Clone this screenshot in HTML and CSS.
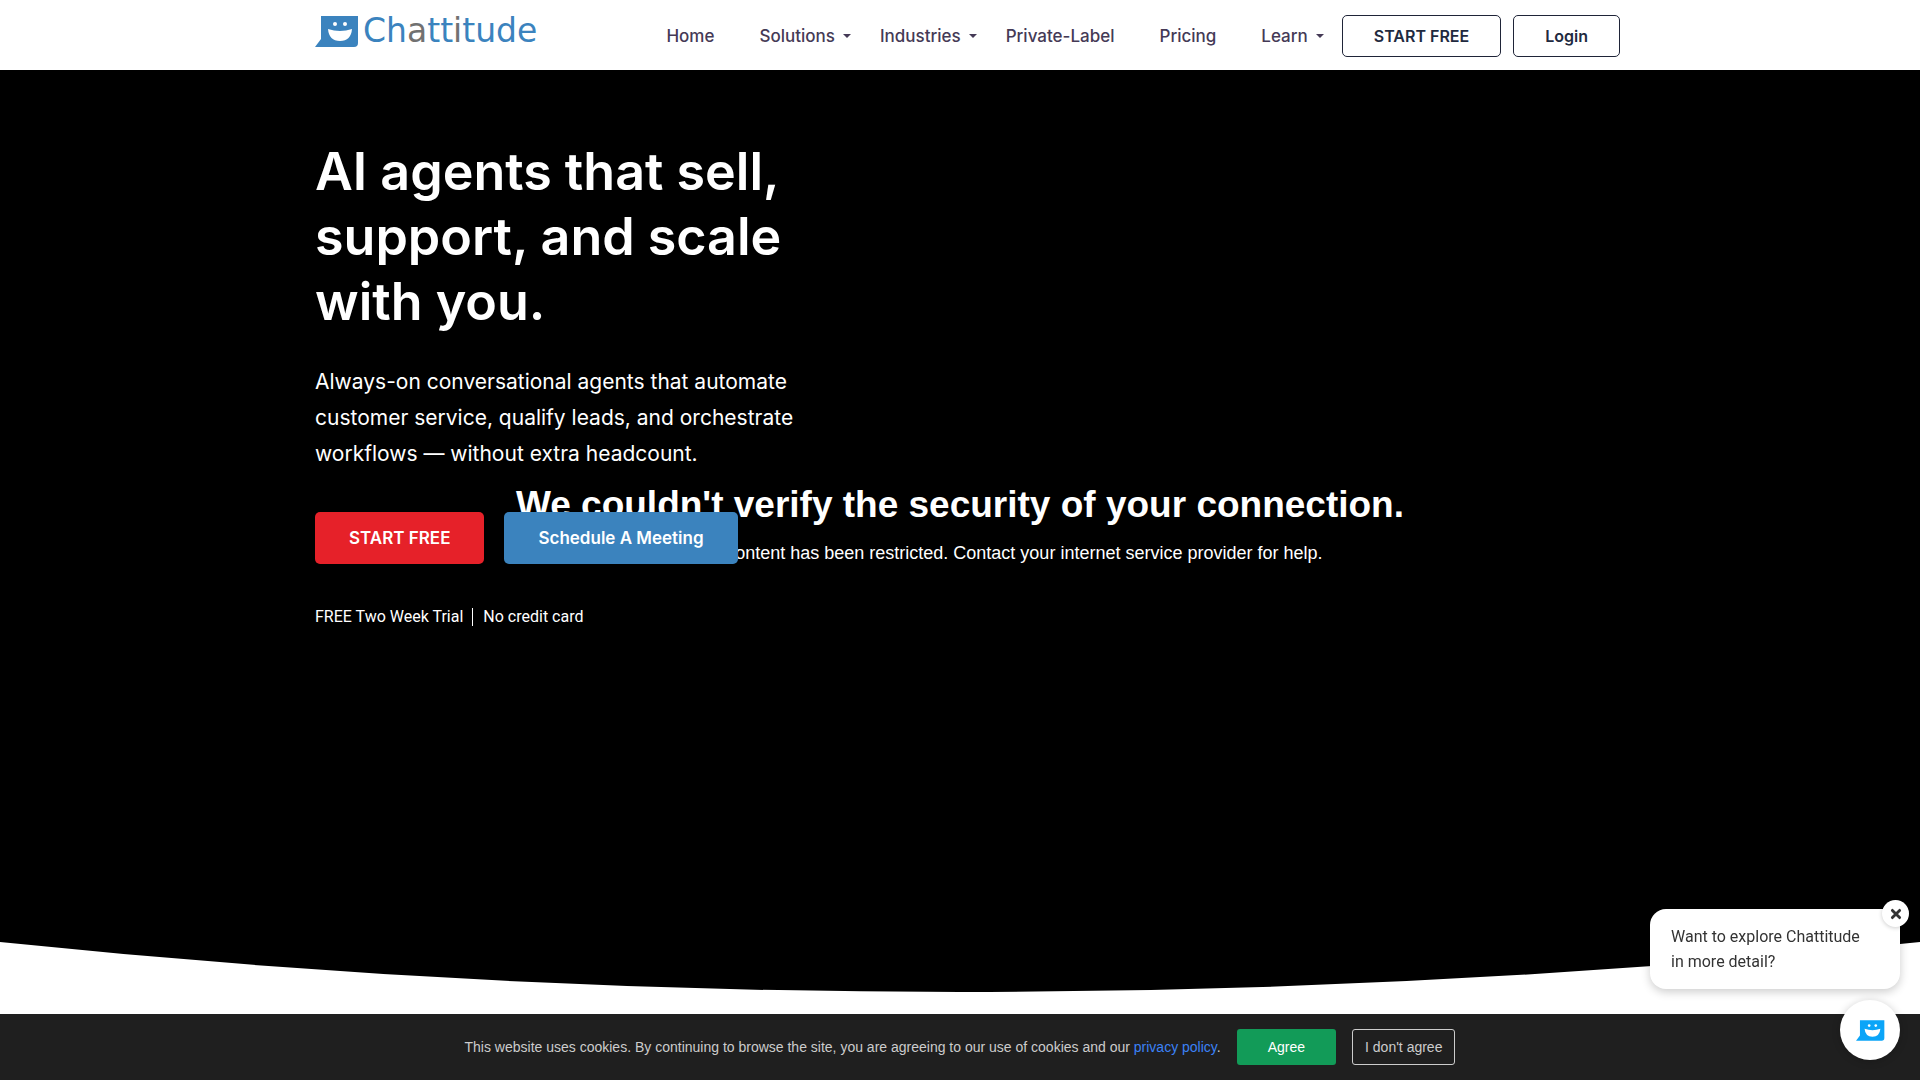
FILE: index.html
```html
<!DOCTYPE html>
<html lang="en">
<head>
<meta charset="utf-8">
<meta name="viewport" content="width=device-width, initial-scale=1">
<title>Chattitude</title>
<link rel="stylesheet" href="styles.css">
</head>
<body>
<svg class="sprite" aria-hidden="true">
  <symbol id="smile" viewBox="0 0 44 31">
    <path fill="currentColor" d="M6 0H43V27Q43 31 39 31H0L6 23Z"/>
    <circle cx="20" cy="8" r="2" fill="#fff"/>
    <circle cx="30" cy="8" r="2" fill="#fff"/>
    <path fill="#fff" d="M13 13Q25 17 37 13Q36 25 25 25Q14 25 13 13Z"/>
  </symbol>
</svg>

<header class="site-header">
  <div class="container header-row">
    <a class="brand" href="#">
      <svg class="brand-mark" aria-hidden="true"><use href="#smile"/></svg>
      <span class="brand-name">Ch<span class="brand-grey">a</span>tt<span class="brand-grey">i</span>tude</span>
    </a>
    <nav class="main-nav" aria-label="Main">
      <a href="#">Home</a>
      <a class="has-menu" href="#">Solutions</a>
      <a class="has-menu" href="#">Industries</a>
      <a href="#">Private-Label</a>
      <a href="#">Pricing</a>
      <a class="has-menu" href="#">Learn</a>
    </nav>
    <div class="header-actions">
      <a class="outline-btn" href="#">START FREE</a>
      <a class="outline-btn" href="#">Login</a>
    </div>
  </div>
</header>

<main>
  <section class="hero">
    <div class="video-message">
      <p class="video-title">We couldn't verify the security of your connection.</p>
      <p class="video-text">For your safety, content has been restricted. Contact your internet service provider for help.</p>
    </div>
    <div class="container hero-content">
      <h1>AI agents that sell,<br>support, and scale<br>with you.</h1>
      <p class="lead">Always-on conversational agents that automate<br>customer service, qualify leads, and orchestrate<br>workflows — without extra headcount.</p>
      <div class="hero-actions">
        <a class="solid-btn red" href="#">START FREE</a>
        <a class="solid-btn blue" href="#">Schedule A Meeting</a>
      </div>
      <p class="trial"><span>FREE Two Week Trial</span><span class="trial-card">No credit card</span></p>
    </div>
  </section>
  <svg class="curve" viewBox="0 0 1920 49" preserveAspectRatio="none" aria-hidden="true"><path d="M0 0Q960 98 1920 0Z"/></svg>
</main>

<aside class="chat">
  <div class="bubble">
    <p>Want to explore Chattitude<br>in more detail?</p>
    <button class="bubble-close" type="button" aria-label="Close">
      <svg viewBox="0 0 10 10" aria-hidden="true"><path d="M2 2L8 8M8 2L2 8"/></svg>
    </button>
  </div>
  <button class="chat-launcher" type="button" aria-label="Open chat"><svg aria-hidden="true"><use href="#smile"/></svg></button>
</aside>

<div class="cookie-bar">
  <p>This website uses cookies. By continuing to browse the site, you are agreeing to our use of cookies and our <a href="#">privacy policy</a>.</p>
  <button class="agree" type="button">Agree</button>
  <button class="disagree" type="button">I don't agree</button>
</div>
</body>
</html>
```
FILE: styles.css
```css
* { box-sizing: border-box; }

body {
  margin: 0;
  background: #fff;
  font-family: Inter, Roboto, sans-serif;
}

p, h1 { margin: 0; }
a { color: inherit; text-decoration: none; }
button { font: inherit; cursor: pointer; }
.sprite { display: none; }

.container {
  max-width: 1320px;
  margin: 0 auto;
  padding-left: 15px;
}

.header-row {
  display: flex;
  align-items: center;
  height: 70px;
  padding-top: 2px;
}

.brand {
  display: flex;
  align-items: center;
  gap: 4px;
  margin-bottom: 10px;
  color: #3b83be;
}
.brand-mark { width: 44px; height: 31px; }
.brand-name {
  font-family: "DejaVu Sans", sans-serif;
  font-size: 33px;
  line-height: 32px;
}
.brand-grey { color: #717171; }

.main-nav {
  display: flex;
  gap: 45px;
  margin-left: auto;
  color: #453a56;
  font-size: 17px;
  font-weight: 500;
  line-height: 24px;
}
.has-menu::after {
  content: "";
  display: inline-block;
  margin: 0 -16px 0 8px;
  border: 4px solid transparent;
  border-top-color: currentColor;
  border-bottom: 0;
  vertical-align: 4px;
}

.header-actions {
  display: flex;
  gap: 12px;
  margin-left: 34px;
}
.outline-btn {
  padding: 8px 31px;
  border: 1px solid #1f2438;
  border-radius: 5px;
  color: #1f2a40;
  font-size: 16px;
  font-weight: 600;
  line-height: 24px;
}

.hero {
  position: relative;
  min-height: 872px;
  padding-top: 69px;
  background: #000;
  color: #fff;
}
.hero-content { position: relative; }
.hero h1 {
  font-size: 52px;
  font-weight: 600;
  line-height: 65px;
}
.lead {
  margin-top: 30px;
  font-size: 21px;
  line-height: 36px;
}
.hero-actions {
  display: flex;
  gap: 20px;
  margin-top: 40px;
}
.solid-btn {
  padding: 14px 34px;
  border-radius: 5px;
  font-size: 17px;
  font-weight: 600;
  line-height: 24px;
}
.red { background: #e62129; }
.blue { background: #3b83be; }
.trial {
  display: flex;
  gap: 9px;
  margin-top: 44px;
  font-family: Roboto, sans-serif;
  font-size: 16px;
  line-height: 18px;
}
.trial-card {
  padding-left: 10px;
  border-left: 1px solid #fff;
}

.video-message {
  position: absolute;
  inset: 415px 0 auto;
  font-family: "Liberation Sans", sans-serif;
  text-align: center;
}
.video-title {
  font-size: 37px;
  font-weight: 700;
  line-height: 40px;
}
.video-text {
  margin-top: 16px;
  font-size: 18px;
  line-height: 24px;
}

.curve {
  display: block;
  width: 100%;
  height: 50px;
  margin-bottom: 88px;
}

.chat {
  position: fixed;
  right: 20px;
  bottom: 20px;
  z-index: 2;
  display: flex;
  flex-direction: column;
  align-items: flex-end;
  gap: 11px;
}
.bubble {
  position: relative;
  width: 250px;
  padding: 15px 21px;
  border-radius: 16px;
  background: #fff;
  box-shadow: 0 3px 10px #0003;
  color: #333;
  font-family: Roboto, sans-serif;
  font-size: 16px;
  line-height: 25px;
}
.bubble-close {
  position: absolute;
  top: -9px;
  right: -9px;
  display: grid;
  place-items: center;
  width: 27px;
  height: 27px;
  padding: 0;
  border: 0;
  border-radius: 50%;
  background: #fff;
  box-shadow: 0 1px 4px #0003;
}
.bubble-close svg {
  width: 12px;
  height: 12px;
  fill: none;
  stroke: #333;
  stroke-width: 2.4;
  stroke-linecap: round;
}
.chat-launcher {
  display: grid;
  place-items: center;
  width: 60px;
  height: 60px;
  padding: 0;
  border: 0;
  border-radius: 50%;
  background: #fff;
  box-shadow: 0 1px 8px #0003;
  color: #0ba5f8;
}
.chat-launcher svg { width: 29px; height: 21px; }
.chat-launcher use { width: 29px; height: 21px; }

.cookie-bar {
  position: fixed;
  inset: auto 0 0;
  display: flex;
  align-items: center;
  justify-content: center;
  gap: 16px;
  padding: 15px;
  background: #1f1f1f;
  color: #ccc;
  font-family: "Liberation Sans", sans-serif;
  font-size: 14px;
  line-height: 20px;
}
.cookie-bar a { color: #3b82f6; }
.cookie-bar button {
  height: 36px;
  border-radius: 3px;
}
.agree {
  padding: 0 31px;
  border: 0;
  background: #129b58;
  color: #fff;
}
.disagree {
  padding: 0 12px;
  border: 1px solid #ccc;
  background: transparent;
  color: #ccc;
}
```
